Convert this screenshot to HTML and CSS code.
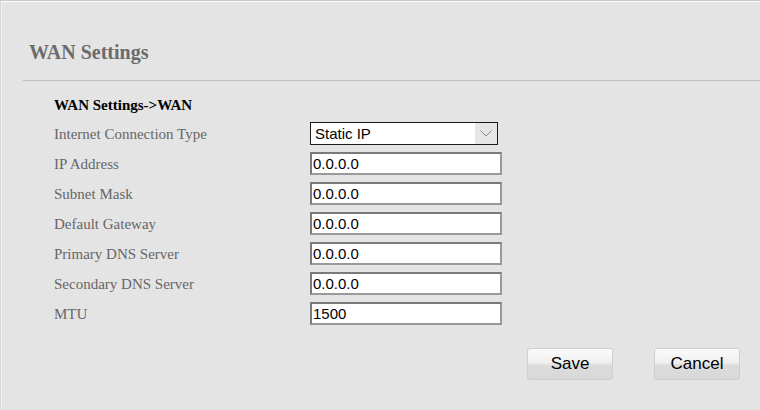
FILE: index.html
```html
<!DOCTYPE html>
<html>
<head>
<meta charset="utf-8">
<link rel="stylesheet" href="styles.css">
</head>
<body>
<div class="page">
  <h1 class="title">WAN Settings</h1>
  <div class="rule"></div>
  <div class="form">
    <div class="subtitle">WAN Settings-&gt;WAN</div>
    <div class="rows">
      <div class="label">Internet Connection Type</div>
      <div class="select"><span class="select-text">Static IP</span><span class="select-btn"><svg width="12" height="7" viewBox="0 0 12 7"><path d="M0.5 0.5 L6 6 L11.5 0.5" fill="none" stroke="#8a8a8a" stroke-width="1"/></svg></span></div>
      <div class="label">IP Address</div>
      <div class="input">0.0.0.0</div>
      <div class="label">Subnet Mask</div>
      <div class="input">0.0.0.0</div>
      <div class="label">Default Gateway</div>
      <div class="input">0.0.0.0</div>
      <div class="label">Primary DNS Server</div>
      <div class="input">0.0.0.0</div>
      <div class="label">Secondary DNS Server</div>
      <div class="input">0.0.0.0</div>
      <div class="label">MTU</div>
      <div class="input">1500</div>
    </div>
  </div>
  <div class="actions">
    <button class="btn">Save</button>
    <button class="btn">Cancel</button>
  </div>
</div>
</body>
</html>
```
FILE: styles.css
```css
html, body {
  margin: 0;
  padding: 0;
}
body {
  width: 760px;
  height: 410px;
  overflow: hidden;
  background: #e4e4e4;
  font-family: "Liberation Serif", "Times New Roman", serif;
}
.page {
  box-sizing: border-box;
  height: 410px;
  border-top: 1px solid #c8c8c8;
  border-left: 1px solid #d6d6d6;
  background: #e4e4e4;
  box-shadow: inset 0 1px 0 #ffffff, inset 1px 0 0 #f2f2f2;
}
.title {
  margin: 0;
  padding: 40px 0 0 28px;
  height: 39px;
  font-size: 20px;
  line-height: 23px;
  font-weight: bold;
  color: #6b6b6b;
}
.rule {
  margin-left: 22px;
  height: 1px;
  background: #bfbfbf;
}
.form {
  padding-left: 53px;
}
.subtitle {
  padding-top: 15px;
  height: 25px;
  font-size: 15px;
  line-height: 18px;
  font-weight: bold;
  color: #000;
}
.rows {
  display: grid;
  grid-template-columns: 256px auto;
  row-gap: 7px;
  align-items: center;
  margin-top: 1px;
}
.label {
  font-size: 15px;
  color: #666666;
  line-height: 23px;
  padding-top: 1px;
  height: 23px;
  box-sizing: border-box;
}
.select {
  box-sizing: border-box;
  width: 188px;
  height: 23px;
  border: 1px solid #1a1a1a;
  background: #fff;
  display: flex;
  align-items: stretch;
  font-family: "Liberation Sans", Arial, sans-serif;
  font-size: 15px;
  color: #000;
}
.select-text {
  flex: 1;
  padding-left: 4px;
  line-height: 21px;
}
.select-btn {
  width: 22px;
  background: #e6e6e6;
  display: flex;
  align-items: center;
  justify-content: center;
}
.input {
  box-sizing: border-box;
  width: 192px;
  height: 23px;
  border: 2px solid #7a7a7a;
  border-right-color: #9a9a9a;
  border-bottom-color: #9a9a9a;
  background: #fff;
  padding-left: 1px;
  font-family: "Liberation Sans", Arial, sans-serif;
  font-size: 15px;
  line-height: 19px;
  color: #000;
}
.actions {
  display: flex;
  justify-content: flex-end;
  gap: 41px;
  padding: 23px 20px 0 0;
}
.btn {
  box-sizing: border-box;
  width: 86px;
  height: 32px;
  border: 1px solid #cfcfcf;
  border-radius: 3px;
  background: linear-gradient(#fafafa, #f0f0f0 45%, #dcdcdc 55%, #d8d8d8);
  font-family: "Liberation Sans", Arial, sans-serif;
  font-size: 17px;
  color: #000;
  padding: 0;
  margin: 0;
}
```
